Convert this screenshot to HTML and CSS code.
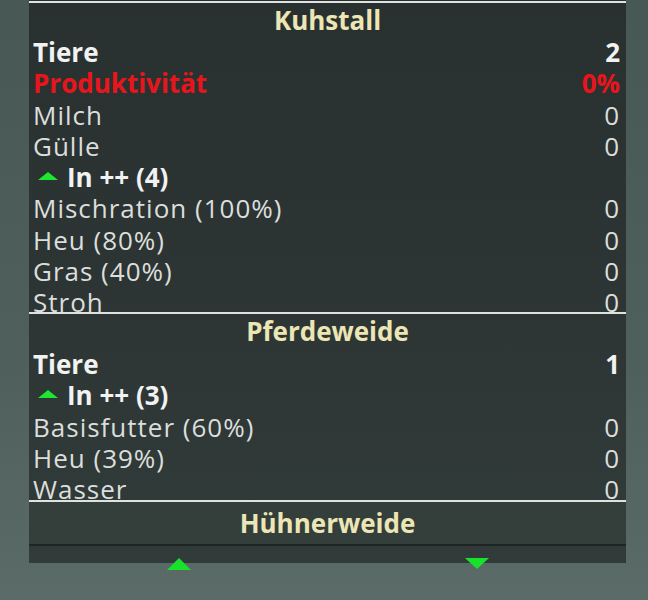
FILE: index.html
```html
<!DOCTYPE html>
<html>
<head>
<meta charset="utf-8">
<link rel="stylesheet" href="styles.css">
</head>
<body>
<div class="panel">
  <div class="sec sec0">
    <div class="row prev"><span class="dim">Produktionsstätten-Information</span><span class="green">100000 l</span></div>
  </div>
  <div class="sec sec1">
    <div class="head">Kuhstall</div>
    <div class="row bold"><span>Tiere</span><span>2</span></div>
    <div class="row bold red"><span>Produktivität</span><span>0%</span></div>
    <div class="row"><span>Milch</span><span>0</span></div>
    <div class="row"><span>Gülle</span><span>0</span></div>
    <div class="row bold"><span class="tri-label"><span class="tri"></span>In ++ (4)</span></div>
    <div class="row"><span>Mischration (100%)</span><span>0</span></div>
    <div class="row"><span>Heu (80%)</span><span>0</span></div>
    <div class="row"><span>Gras (40%)</span><span>0</span></div>
    <div class="row"><span>Stroh</span><span>0</span></div>
  </div>
  <div class="sec sec2">
    <div class="head">Pferdeweide</div>
    <div class="row bold"><span>Tiere</span><span>1</span></div>
    <div class="row bold"><span class="tri-label"><span class="tri"></span>In ++ (3)</span></div>
    <div class="row"><span>Basisfutter (60%)</span><span>0</span></div>
    <div class="row"><span>Heu (39%)</span><span>0</span></div>
    <div class="row"><span>Wasser</span><span>0</span></div>
  </div>
  <div class="sec sec3">
    <div class="head">Hühnerweide</div>
  </div>
  <div class="foot">
    <span class="arrow up"></span>
    <span class="arrow down"></span>
  </div>
</div>
</body>
</html>
```
FILE: styles.css
```css
html, body {
  margin: 0;
  padding: 0;
}
body {
  width: 648px;
  height: 600px;
  overflow: hidden;
  background: linear-gradient(180deg, #485855 0%, #4e5f5c 60%, #5b6b68 100%);
  font-family: "Open Sans", "Noto Sans", sans-serif;
  font-size: 26px;
  line-height: 31px;
  letter-spacing: 1px;
  color: #dcdedc;
}
.panel {
  margin-left: 29px;
  width: 597px;
  background: linear-gradient(180deg, #293130 0%, #2c3533 50%, #313b39 100%);
}
.sec {
  overflow: hidden;
  border-bottom: 2px solid #dfe2df;
}
.sec0 { height: 1px; }
.sec1 { height: 309px; }
.sec2 { height: 186px; }
.sec3 {
  height: 42px;
  border-bottom: 2px solid #1e2524;
  background: #343e3b;
}
.prev { margin-top: -29px; }
.head {
  height: 35px;
  display: flex;
  align-items: center;
  justify-content: center;
  font-weight: 700;
  letter-spacing: 0;
  color: #ece6b6;
}
.sec1 .head { height: 34px; }
.sec3 .head { height: 42px; }
.row {
  height: 31.25px;
  display: flex;
  align-items: center;
  justify-content: space-between;
  padding: 0 6px 0 4px;
  white-space: nowrap;
}
.bold {
  font-weight: 700;
  letter-spacing: 0;
  color: #f2f2f2;
}
.red {
  color: #e8161c;
}
.green { color: #3fcf4a; }
.tri-label {
  display: flex;
  align-items: center;
}
.tri {
  width: 0;
  height: 0;
  border-left: 10px solid transparent;
  border-right: 10px solid transparent;
  border-bottom: 8px solid #1de82e;
  margin: 0 9px 4px 5px;
}
.foot {
  position: relative;
  height: 17px;
}
.arrow {
  position: absolute;
  width: 0;
  height: 0;
  border-left: 12px solid transparent;
  border-right: 12px solid transparent;
}
.arrow.up {
  left: 138px;
  top: 12px;
  border-bottom: 12px solid #19e22c;
}
.arrow.down {
  left: 436px;
  top: 12px;
  border-top: 11px solid #19e22c;
}
```
